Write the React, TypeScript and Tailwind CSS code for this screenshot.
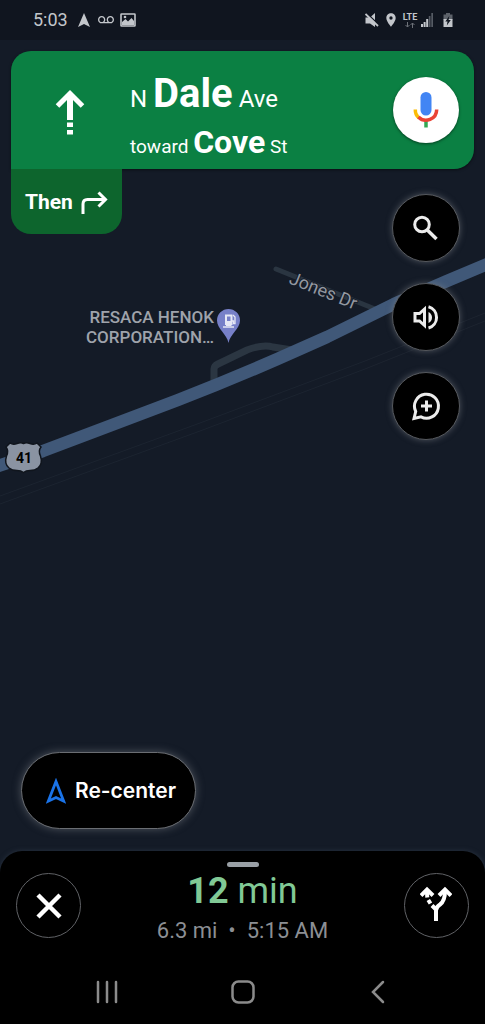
import React from "react";
import { MdLocationOn, MdVoicemail } from "react-icons/md";

function StatusBar() {
  return (
    <header className="flex h-10 items-center justify-between bg-[#10151f] pr-8 pl-[33px] text-[#c3c6cb]">
      <div className="flex items-center">
        <time className="text-lg">5:03</time>
        <svg className="ml-2.5 h-4 w-3" viewBox="0 0 12 16" aria-hidden="true">
          <path d="M6 1 12 15 6 12 0 15Z" fill="currentColor" />
        </svg>
        <MdVoicemail className="ml-2 size-4" />
        <svg className="ml-1.5 h-3.5 w-4" viewBox="0 0 16 14" aria-hidden="true">
          <rect x="1" y="1" width="14" height="12" rx="0.5" fill="none" stroke="currentColor" strokeWidth="1.6" />
          <path d="M2 12V9L5.500 6 8 8.500 11.500 5 14 8V12Z" fill="currentColor" />
          <circle cx="5" cy="4" r="1.300" fill="currentColor" />
        </svg>
      </div>
      <div className="flex items-center">
        <svg className="size-3.5" viewBox="0 0 14 14" aria-hidden="true">
          <path d="M.5 4.500H5L10 0V14L5 10.500H.5Z" fill="currentColor" />
          <path d="M1.500 0 14 12" stroke="#10151f" strokeWidth="1.500" />
          <path d="M.5 1 13 13" stroke="currentColor" strokeWidth="1.800" />
        </svg>
        <MdLocationOn className="ml-1 size-4" />
        <div className="ml-0.5 flex w-[18px] flex-col items-center">
          <span className="text-[9px] leading-[10px] font-bold">LTE</span>
          <svg className="h-1.5 w-2.5" viewBox="0 0 10 6" fill="none" stroke="#6d7178" aria-hidden="true">
            <path d="M2.5 0v5M.5 3l2 2 2-2M7.5 6V1M5.5 3l2-2 2 2" />
          </svg>
        </div>
        <svg className="ml-0.5 h-3.5 w-3" viewBox="0 0 12 14" aria-hidden="true">
          <path d="M0 11h2v3H0zM2.6 9h2v5h-2zM5.2 6h2v8h-2z" fill="#c3c6cb" />
          <path d="M7.8 3h1.7v11H7.8zM10.3 0H12v14h-1.7z" fill="#565b64" />
        </svg>
        <svg className="ml-2.5 h-3.5 w-2.5" viewBox="0 0 10 14" aria-hidden="true">
          <path d="M3 0h4v1.5h2.5V7H.5V1.500H3Z" fill="#5d626a" />
          <path d="M.5 6h9v8h-9z" fill="#c3c6cb" />
          <path d="M6.300 3 2.300 8.500H4.500L3.800 12.500 7.800 7H5.600Z" fill="#10151f" />
        </svg>
      </div>
    </header>
  );
}

function MapCanvas() {
  return (
    <svg
      className="absolute inset-0 h-full w-full"
      viewBox="0 0 485 1024"
      preserveAspectRatio="xMidYMin slice"
      role="img"
      aria-label="Map"
    >
      <g fill="none">
        <path d="M0 496 200 423 365 361 485 313M0 504 200 431 365 369 485 321" stroke="#1c2430" strokeWidth="1" />
        <path d="M276 269 375 309" stroke="#2a3541" strokeWidth="5" strokeLinecap="round" />
        <path d="M214 381V369Q214 366 218 364L247 350Q263 344 273 347L292 350" stroke="#2b3642" strokeWidth="7" />
        <path
          d="M-5 467 43 451 100 429.500 178 400Q240 376 300 349L327 337 394 304 447 281 490 263"
          stroke="#405878"
          strokeWidth="12.500"
          strokeLinejoin="round"
        />
      </g>

      <text
        transform="translate(288 283) rotate(22)"
        className="fill-[#9398a1] text-lg"
        stroke="#141b27"
        strokeWidth="2"
        paintOrder="stroke"
      >
        Jones Dr
      </text>

      <g className="fill-[#9fa3ab] text-[17px] font-medium" textAnchor="end">
        <text x="214" y="323">RESACA HENOK</text>
        <text x="214" y="343">CORPORATION…</text>
      </g>

      <path
        d="M228.500 343C227 334 217 329 217 320.500A11.500 11.500 0 0 1 240 320.500C240 329 230 334 228.500 343Z"
        fill="#7780c8"
      />
      <g fill="none" stroke="#e6e8f5">
        <path d="M226 325V315.500H231.500V325" strokeWidth="2" />
        <path d="M226 321h5.500v5H226z" fill="#e6e8f5" stroke="none" />
        <path d="M223 327H234" strokeWidth="1.500" />
        <path d="M232 321H233.500V323.500H235V317L233 315" strokeWidth="1.300" />
      </g>

      <path
        d="M10 443Q13 445 17 443.500 21 442 23.500 443.500 26 442 30 443.500 34 445 37 443L41 447Q38 451 40.500 456 43 464 38 468 35 470.500 30 470.500 26 470.500 23.500 472.500 21 470.500 17 470.500 12 470.500 9 468 4 464 6.500 456 9 451 6 447Z"
        fill="#8a93a2"
        stroke="#10151d"
        strokeWidth="1.500"
      />
      <text x="24" y="463" textAnchor="middle" className="fill-black text-sm font-bold">
        41
      </text>
    </svg>
  );
}

function MicIcon() {
  return (
    <svg className="h-9 w-[26px]" viewBox="0 0 26 36" fill="none" aria-hidden="true">
      <rect x="7.500" y="0" width="11" height="23.500" rx="5.500" fill="#4285f4" />
      <path d="M13 29v6.500" stroke="#34a853" strokeWidth="3.500" />
      <path d="M2.300 17.500A10.700 10.700 0 0 0 6 26" stroke="#fbbc05" strokeWidth="3.500" />
      <path d="M5.400 25A10.700 10.700 0 0 0 23.700 17.500" stroke="#ea4335" strokeWidth="3.500" />
    </svg>
  );
}

function DirectionBanner() {
  return (
    <section className="flex h-[118px] items-center rounded-[20px] rounded-bl-none bg-[#0b8043] pr-[15px] text-white shadow-[0_1px_3px_#00000080]">
      <svg className="ml-[43px] mt-1 h-12 w-8 shrink-0" viewBox="0 0 32 48" fill="none" aria-hidden="true">
        <path d="M3.500 18 16 5.500 28.500 18" stroke="white" strokeWidth="5" />
        <path d="M16 6v26M16 34.500v4.500M16 42v4.500" stroke="white" strokeWidth="6" />
      </svg>
      <h1 className="ml-11 flex-1 pt-5 font-normal whitespace-nowrap">
        <span className="block text-2xl leading-[44px]">
          N <b className="text-[40px]">Dale</b> Ave
        </span>
        <span className="block text-[19px] leading-[43px]">
          toward <b className="text-[32px]">Cove</b> St
        </span>
      </h1>
      <button
        type="button"
        aria-label="Voice search"
        className="flex size-[66px] shrink-0 items-center justify-center rounded-full bg-white shadow-[0_1px_3px_#00000080]"
      >
        <MicIcon />
      </button>
    </section>
  );
}

function RoundButton({ label, children }: { label: string; children: React.ReactNode }) {
  return (
    <button
      type="button"
      aria-label={label}
      className="flex size-[68px] items-center justify-center rounded-full border border-[#55585d] bg-black text-[#ececec] shadow-[0_0_6px_#8a8d9480]"
    >
      <svg className="size-8" viewBox="0 0 32 32" fill="none" stroke="currentColor" strokeWidth="3" aria-hidden="true">
        {children}
      </svg>
    </button>
  );
}

function TripPanel() {
  return (
    <section className="flex flex-col items-center rounded-t-[22px] bg-black px-4 pt-[11px] shadow-[0_0_5px_#2a3442]">
      <span className="h-[5px] w-8 rounded-full bg-[#9aa0a6]" />
      <div className="flex w-full items-start justify-between">
        <button
          type="button"
          aria-label="Close navigation"
          className="mt-1.5 flex size-[65px] items-center justify-center rounded-full border border-[#606266] text-white"
        >
          <svg className="size-7" viewBox="0 0 28 28" aria-hidden="true">
            <path d="M3 3 25 25M25 3 3 25" stroke="currentColor" strokeWidth="4.500" />
          </svg>
        </button>
        <div className="pt-0.5 text-center">
          <p className="text-4xl leading-[44px] text-[#81c995]">
            <b>12</b> min
          </p>
          <p className="text-[22px] leading-9 text-[#8c8f94]">6.3 mi&nbsp; •&nbsp; 5:15 AM</p>
        </div>
        <button
          type="button"
          aria-label="Alternate routes"
          className="mt-1.5 flex size-[65px] items-center justify-center rounded-full border border-[#606266] pb-1 text-white"
        >
          <svg className="h-9 w-8" viewBox="0 0 32 36" fill="none" stroke="currentColor" aria-hidden="true">
            <path d="M16 35V24.500Q16 21 20 18.500 25 15 25 5" strokeWidth="4" />
            <path d="M19 9.500 25 3.500 31 9.500M1 9.500 7 3.500 13 9.500" strokeWidth="4" />
            <path d="M7 4Q7 9 7.300 11.500M8.300 14 10.500 17.500M12 19.500 16 23.500" strokeWidth="4" />
          </svg>
        </button>
      </div>
    </section>
  );
}

function SystemNav() {
  return (
    <nav className="flex h-[75px] items-center justify-between bg-black px-[95px] pt-[11px] text-[#8b8b8b]">
      <button type="button" aria-label="Recent apps">
        <svg className="size-6" viewBox="0 0 24 24" aria-hidden="true">
          <path d="M3 2v20M12 2v20M21 2v20" stroke="currentColor" strokeWidth="2.500" strokeLinecap="round" />
        </svg>
      </button>
      <button type="button" aria-label="Home">
        <svg className="size-6" viewBox="0 0 24 24" fill="none" aria-hidden="true">
          <rect x="1.500" y="1.500" width="21" height="21" rx="6" stroke="currentColor" strokeWidth="2.500" />
        </svg>
      </button>
      <button type="button" aria-label="Back">
        <svg className="size-6" viewBox="0 0 24 24" fill="none" aria-hidden="true">
          <path d="M17 2 7 12 17 22" stroke="currentColor" strokeWidth="2.500" strokeLinecap="round" />
        </svg>
      </button>
    </nav>
  );
}

export default function App() {
  return (
    <div className="relative flex min-h-screen flex-col overflow-hidden bg-[#141b27] font-['Roboto',sans-serif]">
      <MapCanvas />
      <div className="relative flex flex-1 flex-col">
        <StatusBar />
        <main className="flex flex-1 flex-col">
          <div className="px-[11px] pt-[11px]">
            <DirectionBanner />
            <div className="flex items-start justify-between pr-3.5">
              <div className="flex h-[65px] items-center rounded-b-[20px] bg-[#0d652d] px-3.5 pt-0.5 text-white">
                <span className="text-[21px] font-bold">Then</span>
                <svg className="ml-2 h-6 w-[27px]" viewBox="0 0 27 24" fill="none" aria-label="Turn right">
                  <path d="M2 23V13Q2 8.500 6.500 8.500H24" stroke="white" strokeWidth="3" />
                  <path d="M17.500 1.500 24.500 8.500 17.500 15.500" stroke="white" strokeWidth="3" />
                </svg>
              </div>
              <div className="flex flex-col gap-[21px] pt-[25px]">
                <RoundButton label="Search">
                  <circle cx="12" cy="12.500" r="7.300" />
                  <path d="M17.300 18 26.500 27" strokeWidth="3.500" />
                </RoundButton>
                <RoundButton label="Sound">
                  <path d="M5 12.500H9.500L14.500 8V24.500L9.500 20H5Z" />
                  <path d="M18.500 11V22Q22 20 22 16.500T18.500 11Z" fill="currentColor" stroke="none" />
                  <path d="M18.500 5.800A11 11 0 0 1 18.500 27" />
                </RoundButton>
                <RoundButton label="Add a report">
                  <path d="M4 28.500 5.700 21.500A12 12 0 1 1 11 26.900Z" />
                  <path d="M16.500 10.500v11M11 16h11" />
                </RoundButton>
              </div>
            </div>
          </div>
          <div className="mt-auto px-[21px] pb-[22px]">
            <button
              type="button"
              className="flex h-[77px] items-center rounded-full border border-[#6a6d72] bg-black pr-[19px] pl-6 text-white shadow-[0_0_8px_#8a8d9480]"
            >
              <svg className="h-[26px] w-5" viewBox="0 0 20 26" fill="none" aria-hidden="true">
                <path d="M10 3.500 17.700 23.200 10 19.500 2.300 23.200Z" stroke="#1a73e8" strokeWidth="2.800" />
              </svg>
              <span className="ml-[9px] font-['Inter',sans-serif] text-[21px] font-semibold">Re-center</span>
            </button>
          </div>
        </main>
        <TripPanel />
        <SystemNav />
      </div>
    </div>
  );
}
